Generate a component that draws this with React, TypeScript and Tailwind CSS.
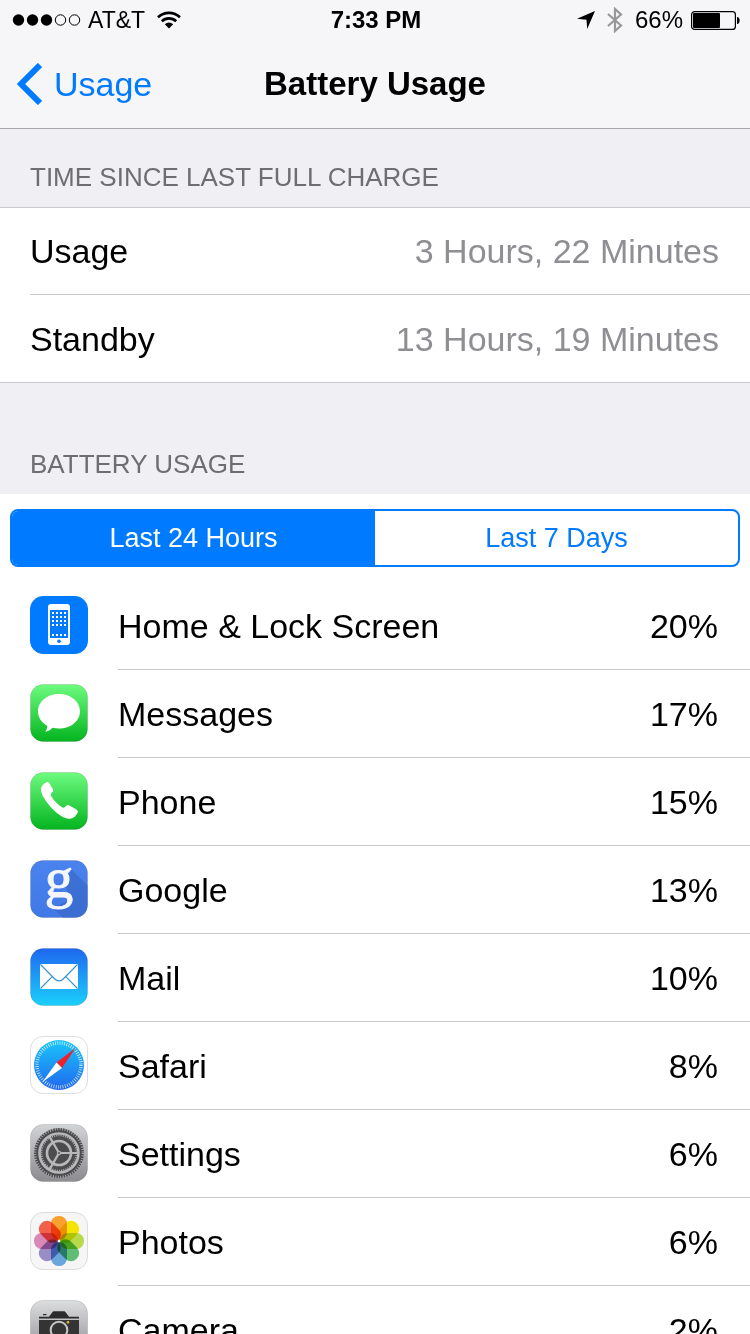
import React, { useState } from 'react';

interface AppUsage {
  name: string;
  percent: number;
  icon: React.ReactNode;
}

/** Gradient-filled rounded tile shared by every app icon */
function Tile({ id, from, to, border, children }: {
  id: string;
  from: string;
  to: string;
  border?: string;
  children: React.ReactNode;
}) {
  return (
    <svg viewBox="0 0 58 58" className="size-[58px] shrink-0 overflow-visible" aria-hidden="true">
      <defs>
        <linearGradient id={id} x1="0" y1="0" x2="0" y2="1">
          <stop offset="0" stopColor={from} />
          <stop offset="1" stopColor={to} />
        </linearGradient>
      </defs>
      <rect x="0.5" y="0.5" width="57" height="57" rx="12.5" fill={`url(#${id})`} stroke={border ?? 'rgba(0,0,0,0.12)'} />
      {children}
    </svg>
  );
}

function HomeIcon() {
  return (
    <Tile id="home" from="#007aff" to="#007aff" border="#007aff">
      <rect x="18" y="8" width="22" height="41" rx="3" fill="#fff" />
      <rect x="20" y="14" width="18" height="28" fill="#007aff" />
      {[16, 20, 24, 28, 38].map((y) =>
        [22, 26, 30, 34].map((x) => <rect key={`${x}-${y}`} x={x} y={y} width="2" height="2" fill="#fff" />)
      )}
      <circle cx="29" cy="45.3" r="1.8" fill="#007aff" />
    </Tile>
  );
}

function MessagesIcon() {
  return (
    <Tile id="messages" from="#6dfb7f" to="#04b41f">
      <path
        d="M29 10c11.8 0 21 7.6 21 17.3S40.800 44.600 29 44.600c-2.300 0-4.500-.3-6.500-.8-1.900 2.100-4.700 3.700-7.300 4 1.300-1.500 2.200-3.800 2.100-6C11.600 38.700 8 33.400 8 27.300 8 17.600 17.200 10 29 10z"
        fill="#fff"
      />
    </Tile>
  );
}

function PhoneIcon() {
  return (
    <Tile id="phone" from="#6dfb7f" to="#04b41f">
      <path
        d="M16.500 10.300c1-.7 2.100-.3 2.700.7l3.600 6.100c.7 1.200.4 2.200-.6 3.200-1.500 1.500-1.700 2.600-.8 4.200 2.600 4.300 6 7.800 10.200 10.500 1.400.9 2.300.9 3.600-.3l1.200-1.100c1-.9 2-.9 3.100-.2l6.900 4.200c1.300.8 1.800 1.800 1.200 3-1.400 3.300-4.300 6.600-8.800 6.200C31.500 46.200 23.500 38.800 17.500 31 13.800 26.200 10.800 21 11 16.800c.1-2.800 2.700-4.800 5.500-6.500z"
        fill="#fff"
      />
    </Tile>
  );
}

function GoogleIcon() {
  return (
    <Tile id="google" from="#4a83ee" to="#4079e6">
      <path d="M41 9l16.500 16.500V45c0 8-5 12.500-12.500 12.500H33L23 48l16-8-3-13z" fill="#3869c9" opacity="0.7" />
      <text
        x="29"
        y="37"
        textAnchor="middle"
        fontSize="57"
        fill="#f4f6fb"
        stroke="#f4f6fb"
        strokeWidth="1"
        className="font-['Liberation_Serif',serif]"
      >
        g
      </text>
    </Tile>
  );
}

function MailIcon() {
  return (
    <Tile id="mail" from="#1e68f0" to="#1bd0fc">
      <rect x="10" y="16" width="38" height="25" rx="1" fill="#fff" />
      <g fill="none" stroke="#2e93dd" strokeWidth="1.100">
        <path d="M10.500 16.500l13.800 14c3 3.200 6.400 3.200 9.400 0l13.800-14" />
        <path d="M10.500 40.500l11.700-11.800M47.500 40.500L35.800 28.700" />
      </g>
    </Tile>
  );
}

function SafariIcon() {
  return (
    <Tile id="safari" from="#ffffff" to="#ffffff" border="#dedede">
      <defs>
        <linearGradient id="dial" x1="0" y1="0" x2="0" y2="1">
          <stop offset="0" stopColor="#1bc6fb" />
          <stop offset="1" stopColor="#1f68ee" />
        </linearGradient>
      </defs>
      <circle cx="29" cy="29" r="25" fill="url(#dial)" />
      <circle cx="29" cy="29" r="22" fill="none" stroke="#fff" strokeWidth="3.500" strokeDasharray="0.720 1.584" opacity="0.85" />
      <path d="M45.500 12L32 32l-5.500-5.500z" fill="#f0202b" />
      <path d="M12.500 46L26.500 26.500 32 32z" fill="#fff" />
    </Tile>
  );
}

function SettingsIcon() {
  return (
    <Tile id="settings" from="#d3d4d6" to="#8b8b90">
      <circle cx="29" cy="29" r="25" fill="#4c4c4f" />
      <circle cx="29" cy="29" r="24" fill="none" stroke="#b2b2b4" strokeWidth="2.500" strokeDasharray="0.900 1.613" />
      <circle cx="29" cy="29" r="19.500" fill="none" stroke="#b8b8ba" strokeWidth="2.600" />
      <circle cx="29" cy="29" r="17.500" fill="none" stroke="#b2b2b4" strokeWidth="1.600" strokeDasharray="1 1.199" />
      <circle cx="29" cy="29" r="12" fill="none" stroke="#b8b8ba" strokeWidth="2.600" />
      <g stroke="#b8b8ba" strokeWidth="2.200">
        <path d="M29 29H48.500M29 29L19.300 12.100M29 29L19.300 45.900" />
      </g>
      <circle cx="29" cy="29" r="2.200" fill="#b8b8ba" />
      <circle cx="29" cy="29" r="1" fill="#4c4c4f" />
    </Tile>
  );
}

const PETALS = ['#f9a12e', '#f3e500', '#b8d94a', '#62bd74', '#6aa5dc', '#9a8cc5', '#d988b8', '#f2604d'];

function PhotosIcon() {
  return (
    <Tile id="photos" from="#f6f6f6" to="#f6f6f6" border="#dcdcdc">
      <g className="isolate">
        {PETALS.map((color, i) => (
          <rect
            key={color}
            x="21"
            y="4"
            width="16"
            height="24"
            rx="7.500"
            fill={color}
            transform={`rotate(${i * 45} 29 29)`}
            className="mix-blend-multiply"
          />
        ))}
      </g>
      <circle cx="29" cy="29" r="1.300" fill="#fff" />
    </Tile>
  );
}

function CameraIcon() {
  return (
    <Tile id="camera" from="#dcddde" to="#8b8b90">
      <path d="M9 18.500v-1.800h10l3-4c.7-1 1.500-1.400 2.500-1.400h9c1 0 1.800.4 2.500 1.400l3 4h10v1.800z" fill="#2b2b2c" />
      <rect x="13" y="14" width="3.500" height="1.200" fill="#2b2b2c" />
      <rect x="9" y="20" width="40" height="26" fill="#343435" />
      <circle cx="29" cy="30" r="8.300" fill="#343435" stroke="#c6c7c9" strokeWidth="2" />
      <circle cx="38" cy="22.300" r="1.300" fill="#e5b840" />
    </Tile>
  );
}

const apps: AppUsage[] = [
  { name: 'Home & Lock Screen', percent: 20, icon: <HomeIcon /> },
  { name: 'Messages', percent: 17, icon: <MessagesIcon /> },
  { name: 'Phone', percent: 15, icon: <PhoneIcon /> },
  { name: 'Google', percent: 13, icon: <GoogleIcon /> },
  { name: 'Mail', percent: 10, icon: <MailIcon /> },
  { name: 'Safari', percent: 8, icon: <SafariIcon /> },
  { name: 'Settings', percent: 6, icon: <SettingsIcon /> },
  { name: 'Photos', percent: 6, icon: <PhotosIcon /> },
  { name: 'Camera', percent: 2, icon: <CameraIcon /> },
];

const ranges = ['Last 24 Hours', 'Last 7 Days'];

function StatusBar() {
  return (
    <div className="grid h-10 grid-cols-[1fr_auto_1fr] items-center pr-2.5 pl-3 text-2xl">
      <div className="flex items-center">
        {/* Signal strength */}
        <svg viewBox="0 0 70 12" className="h-3 w-[70px]" aria-hidden="true">
          <circle cx="6.500" cy="6" r="5.700" />
          <circle cx="20.500" cy="6" r="5.700" />
          <circle cx="34.500" cy="6" r="5.700" />
          <circle cx="48.500" cy="6" r="5.200" fill="none" stroke="#000" />
          <circle cx="62.500" cy="6" r="5.200" fill="none" stroke="#000" />
        </svg>
        <span className="ml-1.5 text-[23px]">AT&amp;T</span>
        <svg viewBox="0 0 24 18" className="ml-3 h-[18px] w-6" fill="none" stroke="#000" aria-hidden="true">
          <path d="M1 6.200a16 16 0 0 1 22 0" strokeWidth="2.700" />
          <path d="M4.800 10.200a10.500 10.500 0 0 1 14.400 0" strokeWidth="2.600" />
          <path d="M12 17.500l-4.200-4.200a6 6 0 0 1 8.400 0z" fill="#000" stroke="none" />
        </svg>
      </div>
      <span className="font-bold">7:33 PM</span>
      <div className="flex items-center justify-end">
        <svg viewBox="0 0 18 18" className="size-[18px]" aria-hidden="true">
          <path d="M18 0L10.200 18 9.500 8.700 0 7.800z" />
        </svg>
        <svg viewBox="0 0 16 26" className="ml-3 h-[26px] w-4" fill="none" stroke="#97979a" strokeWidth="2.200" aria-hidden="true">
          <path d="M1 7l13 11.500L8 24V2l6 5.500L1 19" />
        </svg>
        <span className="ml-3">66%</span>
        <svg viewBox="0 0 49 19" className="ml-2 h-[19px] w-[49px]" aria-hidden="true">
          <rect x="0.600" y="0.600" width="43.800" height="17.800" rx="3" fill="none" stroke="#000" strokeWidth="1.200" />
          <rect x="2" y="2" width="27" height="15" rx="1" />
          <path d="M46 6c3.500 0 3.500 7 0 7z" />
        </svg>
      </div>
    </div>
  );
}

function SummaryRow({ label, value }: { label: string; value: string }) {
  return (
    <div className="ml-[30px] flex h-[87px] items-center justify-between border-b border-[#c8c7cc] pr-[31px] last:border-b-0">
      <dt>{label}</dt>
      <dd className="text-[#8e8e93]">{value}</dd>
    </div>
  );
}

export default function App() {
  const [range, setRange] = useState(ranges[0]);

  return (
    <div className="flex h-screen flex-col bg-[#efeff4] font-['Liberation_Sans',Arial,sans-serif] text-[34px] leading-10 text-black">
      <header className="border-b border-[#a7a7aa] bg-[#f6f6f8]">
        <StatusBar />
        <div className="grid h-22 grid-cols-[1fr_auto_1fr] items-center px-4">
          <button type="button" className="flex items-center gap-3 justify-self-start text-[#007aff]">
            <svg viewBox="0 0 26 42" className="h-[42px] w-[26px]" fill="none" stroke="currentColor" strokeWidth="6" aria-hidden="true">
              <path d="M24 2L5 21 24 40" />
            </svg>
            Usage
          </button>
          <h1 className="text-[33px] font-bold">Battery Usage</h1>
        </div>
      </header>

      <main className="min-h-0 flex-1 overflow-y-auto [scrollbar-width:none]">
        {/* Time since last full charge */}
        <section>
          <h2 className="px-[30px] pt-8 pb-3.5 text-[26px] leading-8 text-[#6d6d72]">TIME SINCE LAST FULL CHARGE</h2>
          <dl className="border-y border-[#c8c7cc] bg-white">
            <SummaryRow label="Usage" value="3 Hours, 22 Minutes" />
            <SummaryRow label="Standby" value="13 Hours, 19 Minutes" />
          </dl>
        </section>

        {/* Per-app usage */}
        <section>
          <h2 className="px-[30px] pt-[65px] pb-3.5 text-[26px] leading-8 text-[#6d6d72]">BATTERY USAGE</h2>
          <div className="bg-white pt-[15px]">
            <div className="mx-2.5 grid grid-cols-2 overflow-hidden rounded-lg border-2 border-[#007aff] text-[27px]">
              {ranges.map((item) => (
                <button
                  key={item}
                  type="button"
                  aria-pressed={item === range}
                  onClick={() => setRange(item)}
                  className={item === range ? 'h-[54px] bg-[#007aff] text-white' : 'h-[54px] text-[#007aff]'}
                >
                  {item}
                </button>
              ))}
            </div>

            <ul className="pt-[15px]">
              {apps.map((app) => (
                <li key={app.name} className="flex h-22 gap-[30px] pl-[30px]">
                  <div className="flex items-center pb-0.5">{app.icon}</div>
                  <div className="flex flex-1 items-center justify-between border-b border-[#c8c7cc] pr-8">
                    <span>{app.name}</span>
                    <span>{app.percent}%</span>
                  </div>
                </li>
              ))}
            </ul>
          </div>
        </section>
      </main>
    </div>
  );
}
